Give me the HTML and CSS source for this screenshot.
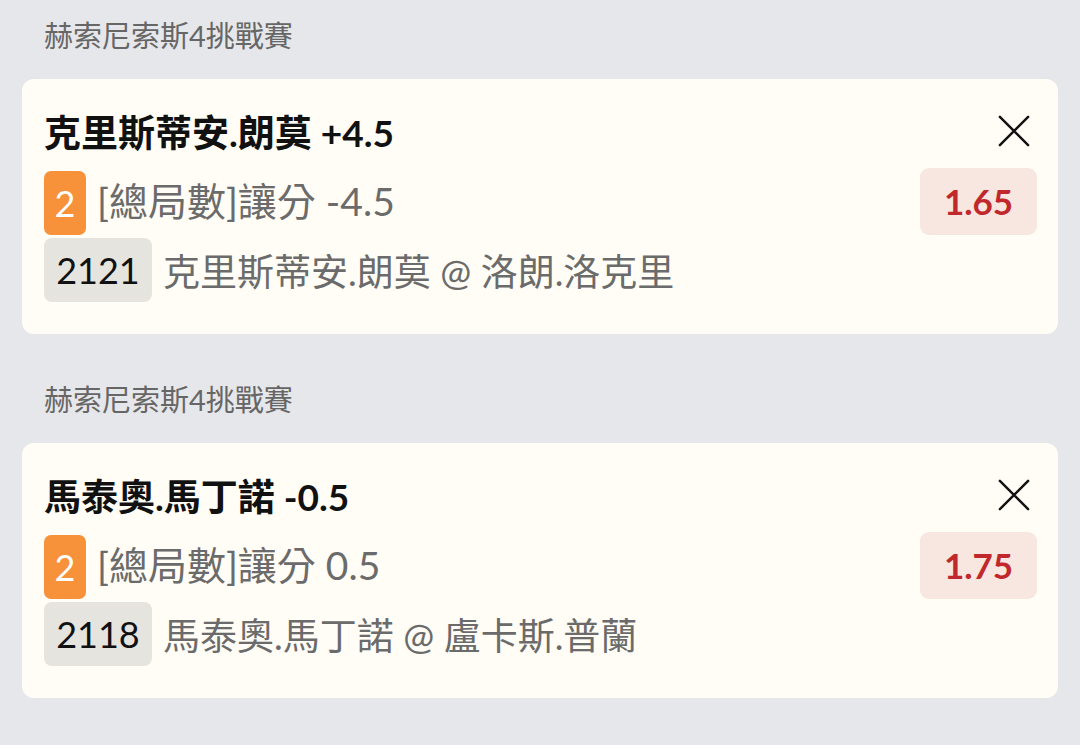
FILE: index.html
```html
<!DOCTYPE html>
<html lang="zh-Hant">
<head>
<meta charset="utf-8">
<link rel="stylesheet" href="styles.css">
</head>
<body>
<div class="list">
  <section class="group">
    <div class="league">赫索尼索斯4挑戰賽</div>
    <div class="card">
      <div class="title-row">
        <div class="title">克里斯蒂安.朗莫 +4.5</div>
        <svg class="close" width="34" height="34" viewBox="0 0 34 34"><path d="M2 2 L32 32 M32 2 L2 32" stroke="#111" stroke-width="2.6" stroke-linecap="round" fill="none"/></svg>
      </div>
      <div class="bet-row">
        <div class="bet-left">
          <span class="num-badge">2</span>
          <span class="market">[總局數]讓分 -4.5</span>
        </div>
        <div class="odds">1.65</div>
      </div>
      <div class="match-row">
        <span class="code-badge">2121</span>
        <span class="match">克里斯蒂安.朗莫 @ 洛朗.洛克里</span>
      </div>
    </div>
  </section>
  <section class="group">
    <div class="league">赫索尼索斯4挑戰賽</div>
    <div class="card">
      <div class="title-row">
        <div class="title">馬泰奧.馬丁諾 -0.5</div>
        <svg class="close" width="34" height="34" viewBox="0 0 34 34"><path d="M2 2 L32 32 M32 2 L2 32" stroke="#111" stroke-width="2.6" stroke-linecap="round" fill="none"/></svg>
      </div>
      <div class="bet-row">
        <div class="bet-left">
          <span class="num-badge">2</span>
          <span class="market">[總局數]讓分 0.5</span>
        </div>
        <div class="odds">1.75</div>
      </div>
      <div class="match-row">
        <span class="code-badge">2118</span>
        <span class="match">馬泰奧.馬丁諾 @ 盧卡斯.普蘭</span>
      </div>
    </div>
  </section>
</div>
</body>
</html>
```
FILE: styles.css
```css
html, body {
  margin: 0;
  padding: 0;
  background: #e6e7ea;
}
body {
  font-family: Lato, "Noto Sans CJK TC", "Noto Sans", sans-serif;
  width: 1080px;
  height: 745px;
  overflow: hidden;
}
.list {
  display: flex;
  flex-direction: column;
  gap: 44px;
  padding: 14px 22px 0 22px;
}
.league {
  height: 44px;
  line-height: 44px;
  margin: 0 0 21px 22px;
  font-size: 29px;
  color: #666;
}
.card {
  background: #fffdf5;
  border-radius: 12px;
  padding: 16px 21px 32px 22px;
  display: flex;
  flex-direction: column;
}
.title-row {
  height: 72px;
  display: flex;
  align-items: center;
  justify-content: space-between;
}
.title {
  font-size: 37px;
  font-weight: 700;
  color: #111;
}
.close {
  margin-right: 7px;
  width: 32px;
  height: 32px;
}
.bet-row {
  height: 68px;
  display: flex;
  align-items: center;
  justify-content: space-between;
}
.bet-left {
  align-self: flex-end;
  display: flex;
  align-items: center;
  gap: 11px;
}
.num-badge {
  width: 42px;
  height: 64px;
  display: flex;
  align-items: center;
  justify-content: center;
  background: #f7913a;
  color: #fff;
  border-radius: 7px;
  font-size: 36px;
}
.market {
  font-size: 39px;
  line-height: 1;
  padding-bottom: 4px;
  color: #6b6b6b;
}
.odds {
  width: 117px;
  height: 67px;
  display: flex;
  align-items: center;
  justify-content: center;
  background: #f8e6e0;
  border-radius: 9px;
  color: #c0282b;
  font-size: 35px;
  font-weight: 700;
}
.match-row {
  margin-top: 3px;
  display: flex;
  align-items: center;
  gap: 11px;
}
.code-badge {
  height: 64px;
  width: 108px;
  display: flex;
  align-items: center;
  justify-content: center;
  background: #e6e4de;
  border-radius: 8px;
  font-size: 36px;
  color: #111;
}
.match {
  font-size: 37px;
  color: #6b6b6b;
}
```
